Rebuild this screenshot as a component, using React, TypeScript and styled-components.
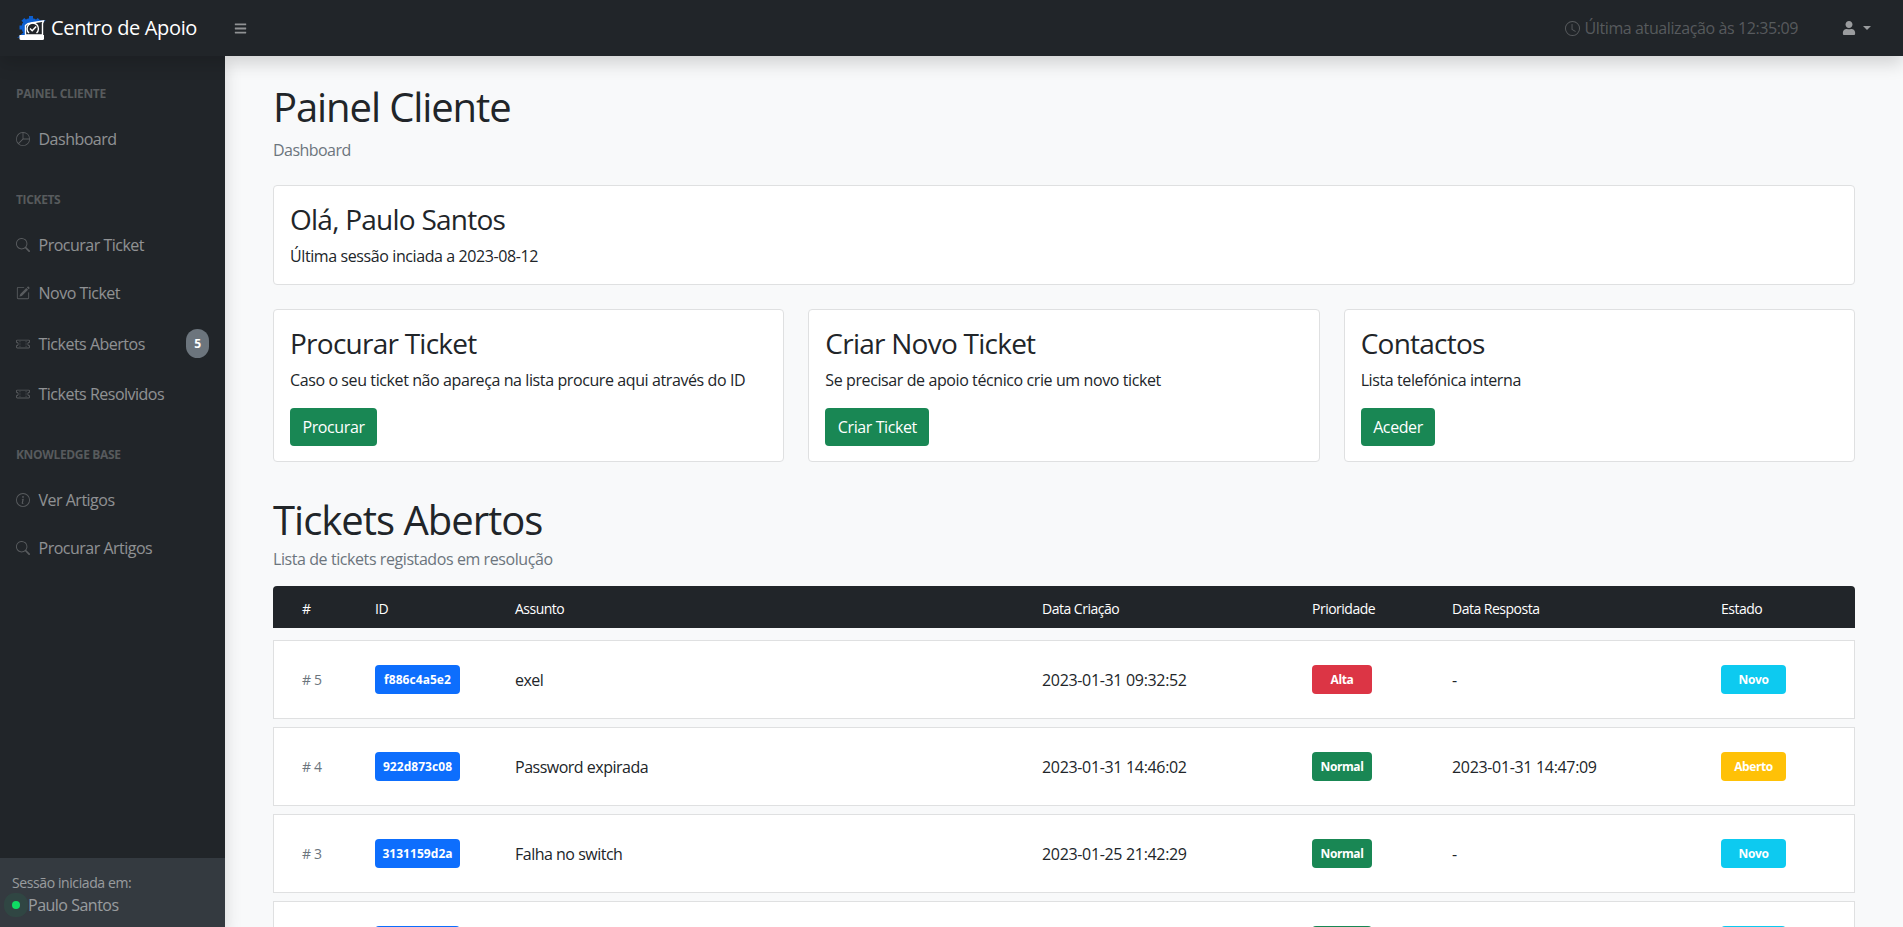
import React from "react";
import styled, { createGlobalStyle } from "styled-components";
import { BsPieChart, BsSearch, BsPencilSquare, BsTicketPerforated, BsInfoCircle, BsClock } from "react-icons/bs";
import { FaUser, FaBars } from "react-icons/fa";

const Global = createGlobalStyle`
  html, body { margin: 0; height: 100%; overflow: hidden; }
  body { background: #f8f9fa; color: #212529; font-family: "Open Sans", "Noto Sans", "Liberation Sans", sans-serif; font-size: 16px; line-height: 24px; letter-spacing: -0.4px; }
  * { box-sizing: border-box; }
  h1, h2, h3, p { margin: 0; font-weight: 400; }
`;
const Shell = styled.div`height: 927px; display: flex; flex-direction: column; overflow: hidden;`;
const TopNav = styled.header`height: 56px; flex: none; background: #212529; display: flex; align-items: center; position: relative; z-index: 3; box-shadow: 0 8px 16px rgba(0,0,0,.15);`;
const Brand = styled.a`width: 225px; padding-left: 17px; display: flex; align-items: center; gap: 5px; color: #fff; font-size: 20px; letter-spacing: -0.35px; flex: none;`;
const Toggle = styled.button`background: none; border: 0; padding: 0; margin: 1px 0 0 9px; color: rgba(255,255,255,.5); display: flex; font-size: 13px;`;
const Updated = styled.div`margin-left: auto; display: flex; align-items: center; gap: 5px; color: rgba(255,255,255,.25); font-size: 16px; letter-spacing: -0.4px;`;
const UserMenu = styled.div`display: flex; align-items: center; gap: 7px; margin: 0 32px 0 44px; color: rgba(255,255,255,.55); font-size: 14px;`;
const Caret = styled.span`width: 0; height: 0; border-left: 4px solid transparent; border-right: 4px solid transparent; border-top: 4px solid currentColor;`;
const Body = styled.div`flex: 1; display: flex; min-height: 0;`;
const Side = styled.aside`width: 225px; flex: none; background: #212529; display: flex; flex-direction: column; position: relative; z-index: 2; box-shadow: 0 8px 16px rgba(0,0,0,.15);`;
const SideMenu = styled.nav`flex: 1; padding-top: 1px;`;
const MenuHeading = styled.div`padding: 28px 16px 12px; font-size: 12px; line-height: 18px; font-weight: 700; text-transform: uppercase; letter-spacing: -0.35px; color: rgba(255,255,255,.25);`;
const MenuLink = styled.a`display: flex; align-items: center; padding: 12px 16px; color: rgba(255,255,255,.5); letter-spacing: -0.5px;
  svg { font-size: 14px; margin-right: 8.500px; color: rgba(255,255,255,.25); flex: none; }`;
const Pill = styled.span`margin-left: auto; min-width: 23px; height: 29px; border-radius: 12px; background: #6c757d; color: #fff; font-size: 12px; font-weight: 700; display: flex; align-items: center; justify-content: center;`;
const SideFooter = styled.div`height: 69px; background: #343a40; padding: 14px 12px; color: rgba(255,255,255,.5); font-size: 14px; line-height: 21px;`;
const Online = styled.div`display: flex; align-items: center; font-size: 16px; line-height: 24px; position: relative; padding-left: 16px; letter-spacing: -0.5px;`;
const Dot = styled.span`position: absolute; left: 0; top: 8px; width: 8px; height: 8px; border-radius: 50%; background: #0fdc63; box-shadow: 0 0 0 8px rgba(15,220,99,.08);`;
const Main = styled.main`flex: 1; min-width: 0; padding: 24px 48px; overflow: hidden;`;
const Title = styled.h1`font-size: 40px; line-height: 48px; margin-top: 3px; letter-spacing: -1.1px;`;
const Sub = styled.p`color: #6c757d; font-size: 16px; line-height: 24px; margin-top: 7px; letter-spacing: -0.55px;`;
const Card = styled.section`background: #fff; border: 1px solid #dfe0e1; border-radius: 4px; padding: 16px;`;
const HelloCard = styled(Card)`height: 100px; margin-top: 23px;`;
const CardTitle = styled.h3`font-size: 28px; line-height: 34px; margin-bottom: 8px; letter-spacing: -0.75px;`;
const CardText = styled.p`font-size: 16px; line-height: 24px;`;
const CardRow = styled.div`display: grid; grid-template-columns: repeat(3, 1fr); gap: 24px; margin-top: 24px;`;
const ActionCard = styled(Card)`height: 153px;`;
const ActionBtn = styled.a`display: inline-block; margin-top: 16px; height: 38px; line-height: 38px; padding: 0 12.500px; background: #198754; color: #fff; border-radius: 4px;`;
const SectionTitle = styled.h1`font-size: 40px; line-height: 48px; margin-top: 34px; letter-spacing: -1px;`;
const SectionSub = styled.p`color: #6c757d; font-size: 16px; line-height: 24px; margin-top: 3px; letter-spacing: -0.42px;`;
const cols = "73px 140px 527px 270px 140px 269px 1fr";
const TableHead = styled.div`display: grid; grid-template-columns: ${cols}; align-items: center; height: 42px; margin-top: 15px; padding: 3px 0 0 29px; background: #212529; color: #fff; font-size: 14px; letter-spacing: -0.5px; border-radius: 4px 4px 0 0;`;
const Rows = styled.div`display: flex; flex-direction: column; gap: 8px; margin-top: 12px;`;
const Row = styled.div`display: grid; grid-template-columns: ${cols}; align-items: center; height: 79px; flex: none; padding-left: 28px; background: #fff; border: 1px solid #dfe0e1; letter-spacing: -0.33px;`;
const Num = styled.span`color: #6c757d; font-size: 14px;`;
const Subject = styled.span`letter-spacing: -0.5px;`;
const Tag = styled.span<{ $bg: string; $w: number }>`display: flex; align-items: center; justify-content: center; height: 29px; width: ${p => p.$w}px; background: ${p => p.$bg}; color: #fff; font-size: 12px; font-weight: 700; border-radius: 4px; letter-spacing: -0.4px;`;
const IdTag = styled(Tag)`letter-spacing: 0.05px;`;

const Logo = () => (
  <svg width="29" height="25" viewBox="0 0 29 25" aria-hidden="true">
    <g fill="#0d5fd0">
      <circle cx="14" cy="11.500" r="9.500" />
      <rect x="12" y="0" width="4" height="4" />
      <rect x="12" y="0" width="4" height="4" transform="rotate(45 14 11.500)" />
      <rect x="12" y="0" width="4" height="4" transform="rotate(-45 14 11.500)" />
      <rect x="12" y="0" width="4" height="4" transform="rotate(-90 14 11.500)" />
      <path d="M0 22l7-6 2 4z" />
      <path d="M16 4l13 .5-7 4z" />
    </g>
    <path fill="#212529" stroke="#fff" strokeWidth="1.400" d="M8.500 19V9.500C10 7.800 12 7 14 7l12.500-2-1 2.500V19z" />
    <path fill="none" stroke="#fff" strokeWidth="1.400" d="M12 17a5.700 5.700 0 1 1 7.500 0" />
    <path fill="none" stroke="#fff" strokeWidth="1.500" d="M13 12.500l2.200 2.200 4-4.200" />
    <path fill="#fff" d="M2.500 19h24.500v3.500a1.500 1.500 0 0 1-1.500 1.500H4a1.500 1.500 0 0 1-1.500-1.500z" />
  </svg>
);

const tickets = [
  ["# 5", "f886c4a5e2", "exel", "2023-01-31 09:32:52", "Alta", "-", "Novo"],
  ["# 4", "922d873c08", "Password expirada", "2023-01-31 14:46:02", "Normal", "2023-01-31 14:47:09", "Aberto"],
  ["# 3", "3131159d2a", "Falha no switch", "2023-01-25 21:42:29", "Normal", "-", "Novo"],
  ["# 2", "a41c07e9b3", "Impressora", "2023-01-20 10:12:40", "Normal", "-", "Novo"],
];
const prio: Record<string, string> = { Alta: "#dc3545", Normal: "#198754" };
const state: Record<string, string> = { Novo: "#0dcaf0", Aberto: "#ffc107" };
const cards = [
  ["Procurar Ticket", "Caso o seu ticket não apareça na lista procure aqui através do ID", "Procurar"],
  ["Criar Novo Ticket", "Se precisar de apoio técnico crie um novo ticket", "Criar Ticket"],
  ["Contactos", "Lista telefónica interna", "Aceder"],
];

export default function App() {
  return (
    <Shell>
      <Global />
      <TopNav>
        <Brand><Logo />Centro de Apoio</Brand>
        <Toggle aria-label="menu"><FaBars /></Toggle>
        <Updated><BsClock size={15} />Última atualização às 12:35:09</Updated>
        <UserMenu><FaUser /><Caret /></UserMenu>
      </TopNav>
      <Body>
        <Side>
          <SideMenu>
            <MenuHeading>Painel Cliente</MenuHeading>
            <MenuLink><BsPieChart />Dashboard</MenuLink>
            <MenuHeading>Tickets</MenuHeading>
            <MenuLink><BsSearch />Procurar Ticket</MenuLink>
            <MenuLink><BsPencilSquare />Novo Ticket</MenuLink>
            <MenuLink><BsTicketPerforated />Tickets Abertos<Pill>5</Pill></MenuLink>
            <MenuLink><BsTicketPerforated />Tickets Resolvidos</MenuLink>
            <MenuHeading>Knowledge Base</MenuHeading>
            <MenuLink><BsInfoCircle />Ver Artigos</MenuLink>
            <MenuLink><BsSearch />Procurar Artigos</MenuLink>
          </SideMenu>
          <SideFooter>
            Sessão iniciada em:
            <Online><Dot />Paulo Santos</Online>
          </SideFooter>
        </Side>
        <Main>
          <Title>Painel Cliente</Title>
          <Sub>Dashboard</Sub>
          <HelloCard>
            <CardTitle>Olá, Paulo Santos</CardTitle>
            <CardText>Última sessão inciada a 2023-08-12</CardText>
          </HelloCard>
          <CardRow>
            {cards.map(([t, d, b]) => (
              <ActionCard key={t}>
                <CardTitle>{t}</CardTitle>
                <CardText>{d}</CardText>
                <ActionBtn>{b}</ActionBtn>
              </ActionCard>
            ))}
          </CardRow>
          <SectionTitle>Tickets Abertos</SectionTitle>
          <SectionSub>Lista de tickets registados em resolução</SectionSub>
          <TableHead>
            <span>#</span><span>ID</span><span>Assunto</span><span>Data Criação</span><span>Prioridade</span><span>Data Resposta</span><span>Estado</span>
          </TableHead>
          <Rows>
            {tickets.map(t => (
              <Row key={t[1]}>
                <Num>{t[0]}</Num>
                <IdTag $bg="#0d6efd" $w={85}>{t[1]}</IdTag>
                <Subject>{t[2]}</Subject>
                <span>{t[3]}</span>
                <Tag $bg={prio[t[4]]} $w={60}>{t[4]}</Tag>
                <span>{t[5]}</span>
                <Tag $bg={state[t[6]]} $w={65}>{t[6]}</Tag>
              </Row>
            ))}
          </Rows>
        </Main>
      </Body>
    </Shell>
  );
}
